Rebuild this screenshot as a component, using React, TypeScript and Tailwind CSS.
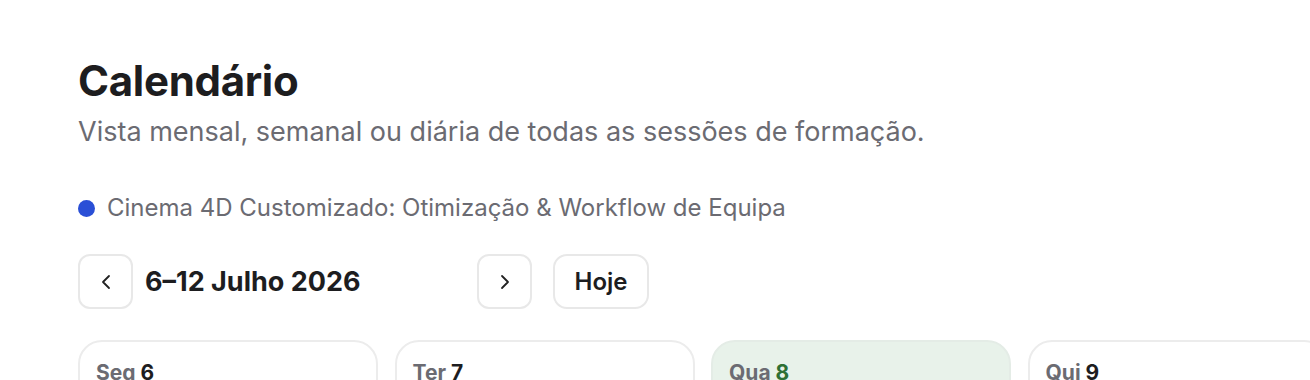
import { ChevronLeft, ChevronRight } from 'lucide-react';

const DAYS = [
  { label: 'Seg', num: 6 },
  { label: 'Ter', num: 7 },
  { label: 'Qua', num: 8, today: true },
  { label: 'Qui', num: 9 },
  { label: 'Sex', num: 10 },
  { label: 'Sáb', num: 11 },
  { label: 'Dom', num: 12 },
];

export default function App() {
  return (
    <div className="h-[380px] bg-white font-['Inter',sans-serif] text-[#1d1d1f] overflow-hidden">
      <div className="pl-[78px] pt-[57px]">
        <h1 className="text-[42px] font-bold leading-[48px] tracking-[-0.3px]">Calendário</h1>
        <p className="mt-[11px] text-[27px] leading-[32px] text-[#6b6b72]">
          Vista mensal, semanal ou diária de todas as sessões de formação.
        </p>

        <div className="mt-[44px] flex items-center gap-[12px]">
          <span className="h-[17px] w-[17px] rounded-full bg-[#2a4fd6]" />
          <span className="text-[24px] leading-[32px] text-[#6b6b72]">
            Cinema 4D Customizado: Otimização &amp; Workflow de Equipa
          </span>
        </div>

        <div className="mt-[30px] flex items-center">
          <button className="flex h-[55px] w-[55px] items-center justify-center rounded-[12px] border-2 border-[#e8e8e8] bg-white">
            <ChevronLeft className="h-[24px] w-[24px] text-[#222]" strokeWidth={1.8} />
          </button>
          <div className="ml-[12px] w-[332px] pt-[2px] text-[27px] font-bold">6–12 Julho 2026</div>
          <button className="flex h-[55px] w-[55px] items-center justify-center rounded-[12px] border-2 border-[#e8e8e8] bg-white">
            <ChevronRight className="h-[24px] w-[24px] text-[#222]" strokeWidth={1.8} />
          </button>
          <button className="ml-[21px] h-[55px] w-[96px] rounded-[14px] border-2 border-[#e8e8e8] bg-white text-[24px] font-semibold">
            Hoje
          </button>
        </div>

        <div className="mt-[31px] flex gap-[16.5px]">
          {DAYS.map((d) => (
            <div
              key={d.num}
              className={`h-[200px] w-[300px] shrink-0 rounded-[24px] border-2 px-[16px] pt-[18px] ${
                d.today ? 'border-[#e4ece6] bg-[#e8f2ea]' : 'border-[#ececec] bg-white'
              }`}
            >
              <div className="text-[21px] font-bold leading-[26px]">
                <span className="text-[#6b6b72]">{d.label}</span>{' '}
                <span className={d.today ? 'text-[#2e7034]' : 'text-[#1d1d1f]'}>{d.num}</span>
              </div>
            </div>
          ))}
        </div>
      </div>
    </div>
  );
}
